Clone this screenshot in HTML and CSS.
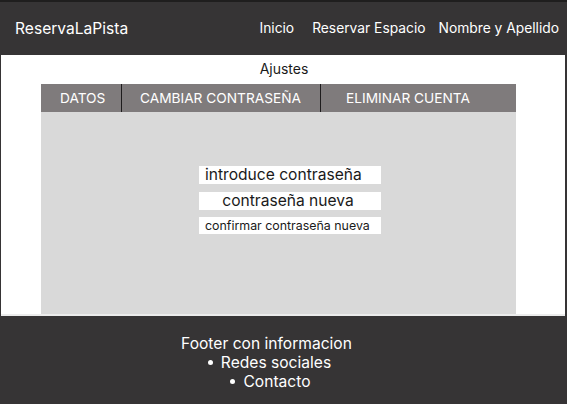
FILE: index.html
```html
<!DOCTYPE html>
<html lang="es">
<head>
<meta charset="utf-8">
<title>ReservaLaPista - Ajustes</title>
<link rel="stylesheet" href="styles.css">
</head>
<body>
<div class="page">
  <header class="topbar">
    <div class="brand">ReservaLaPista</div>
    <nav class="nav">
      <a class="nav-link link-inicio">Inicio</a>
      <a class="nav-link link-reservar">Reservar Espacio</a>
      <a class="nav-link link-user">Nombre y Apellido</a>
    </nav>
  </header>
  <main class="main">
    <h1 class="title">Ajustes</h1>
    <section class="settings">
      <div class="tabs">
        <div class="tab tab-datos">DATOS</div>
        <div class="tab tab-pass">CAMBIAR CONTRASEÑA</div>
        <div class="tab tab-del">ELIMINAR CUENTA</div>
      </div>
      <div class="panel">
        <div class="fields">
          <div class="field field-left">introduce contraseña</div>
          <div class="field field-center">contraseña nueva</div>
          <div class="field field-small">confirmar contraseña nueva</div>
        </div>
      </div>
    </section>
  </main>
  <footer class="footer">
    <div class="footer-inner">
      <div class="footer-title">Footer con informacion</div>
      <ul class="footer-list">
        <li class="item item-1">Redes sociales</li>
        <li class="item item-2">Contacto</li>
      </ul>
    </div>
  </footer>
</div>
</body>
</html>
```
FILE: styles.css
```css
html, body {
  margin: 0;
  padding: 0;
}
body {
  background: #363435;
  font-family: Inter, "Noto Sans", sans-serif;
  width: 567px;
  height: 404px;
  overflow: hidden;
}
.page {
  display: flex;
  flex-direction: column;
  height: 404px;
}
.topbar {
  height: 55px;
  box-sizing: border-box;
  border-top: 2px solid #1f1e1e;
  display: flex;
  align-items: center;
  justify-content: space-between;
  padding: 0 8px 1px 15px;
  color: #ffffff;
}
.brand {
  font-size: 15.6px;
}
.nav {
  display: flex;
  font-size: 13.8px;
}
.nav-link {
  color: #ffffff;
}
.link-reservar {
  margin-left: 18px;
}
.link-user {
  margin-left: 13px;
}
.main {
  background: #ffffff;
  margin: 0 2px 0 1px;
  height: 259px;
  display: flex;
  flex-direction: column;
  border-bottom: 2px solid #ececec;
}
.title {
  margin: 0;
  font-weight: 400;
  font-size: 14px;
  color: #1a1a1a;
  text-align: center;
  padding: 5px 0 0 2px;
  height: 23px;
  line-height: 17px;
  box-sizing: border-box;
}
.settings {
  margin: 6px 0 0 40px;
  width: 475px;
  display: flex;
  flex-direction: column;
  flex: 1;
}
.tabs {
  display: flex;
  height: 28px;
  background: #7f7b7c;
  color: #ffffff;
  font-size: 13.7px;
}
.tab {
  box-sizing: border-box;
  display: flex;
  align-items: center;
  height: 28px;
}
.tab-datos {
  width: 80px;
  padding-left: 19px;
}
.tab-pass {
  width: 199px;
  padding-left: 18px;
  border-left: 1px solid #1e1c1d;
}
.tab-del {
  flex: 1;
  padding-left: 25px;
  border-left: 1px solid #1e1c1d;
}
.panel {
  flex: 1;
  background: #d9d9d9;
}
.fields {
  margin: 54px 0 0 158px;
  width: 182px;
  display: flex;
  flex-direction: column;
}
.field {
  background: #ffffff;
  color: #1a1a1a;
  box-sizing: border-box;
  height: 18px;
  line-height: 18px;
  white-space: nowrap;
}
.field-left {
  font-size: 15.6px;
  padding-left: 6px;
}
.field-center {
  font-size: 15.6px;
  text-align: center;
  padding-right: 4px;
  margin-top: 8px;
}
.field-small {
  font-size: 12.4px;
  padding-left: 6px;
  margin-top: 7px;
  height: 17px;
  line-height: 17px;
}
.footer {
  flex: 1;
  color: #ffffff;
  font-size: 15.6px;
  line-height: 19px;
}
.footer-inner {
  padding: 18px 34px 0 0;
  text-align: center;
}
.footer-list {
  margin: 0;
  padding: 0;
  list-style: none;
}
.item::before {
  content: "";
  display: inline-block;
  width: 5px;
  height: 5px;
  border-radius: 50%;
  background: #ffffff;
  margin-right: 8px;
  vertical-align: middle;
  position: relative;
  top: -1px;
}
.item-1 {
  padding-left: 6px;
}
.item-2 {
  padding-left: 8px;
}
```
